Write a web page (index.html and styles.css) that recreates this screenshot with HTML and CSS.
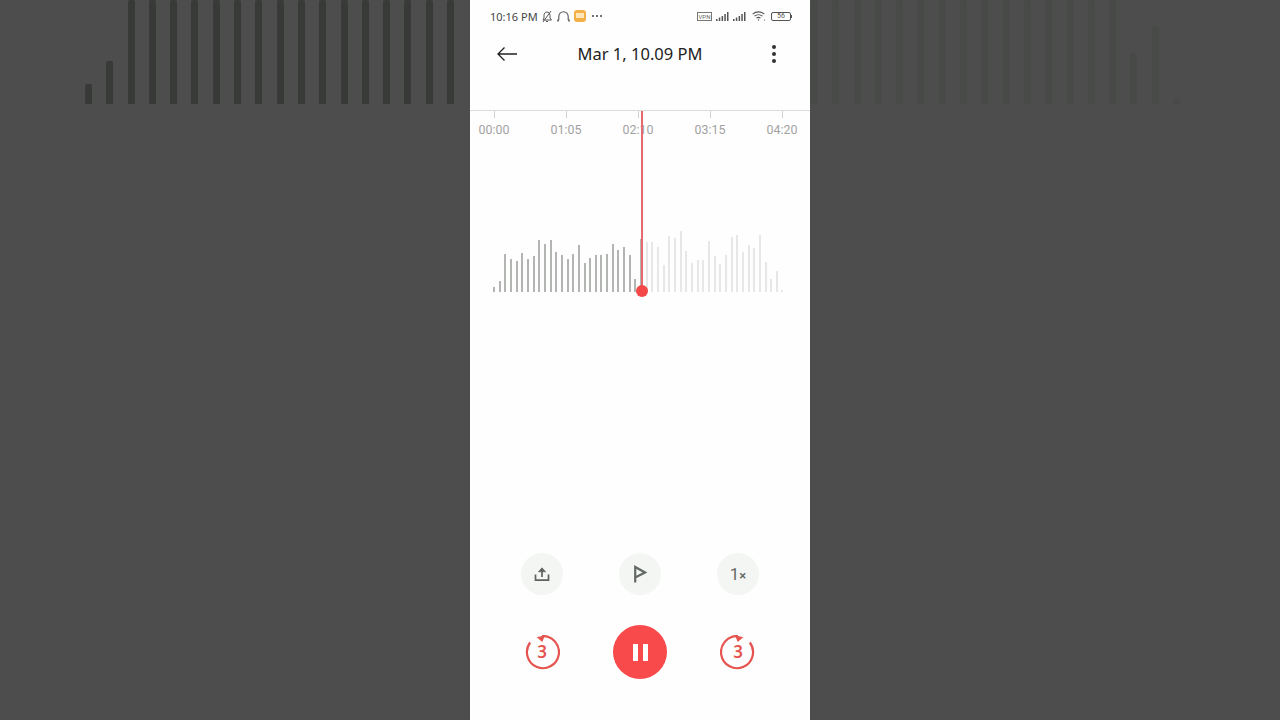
FILE: index.html
```html
<!DOCTYPE html>
<html lang="en">
<head>
  <meta charset="UTF-8" />
  <title>Recorder</title>
  <link rel="stylesheet" href="styles.css">
</head>
<body>
  <div class="side side-left">
    <i style="height:20px"></i><i style="height:43px"></i>
    <i></i><i></i><i></i><i></i><i></i><i></i><i></i><i></i><i></i><i></i><i></i><i></i><i></i><i></i><i></i><i></i>
  </div>

  <div class="phone">
    <div class="status-bar">
      <span class="time">10:16 PM</span>
      <svg class="st-bell" width="12" height="13" viewBox="0 0 12 13" fill="none" stroke="#555" stroke-width="1"><path d="M2 10h8.500L9 8V5.500C9 3.500 7.800 2 6 2S3 3.500 3 5.500V8zM5 11.500h2M10 1 2 12"/></svg>
      <svg class="st-head" width="13" height="13" viewBox="0 0 13 13" fill="none" stroke="#555" stroke-width="1.100"><path d="M1.800 10V6.500a4.700 4.700 0 0 1 9.400 0V10"/><path d="M1 9.500v2M12 9.500v2" stroke-width="1.600"/></svg>
      <span class="st-note"><b></b></span>
      <span class="st-dots"><b></b><b></b><b></b></span>
      <span class="st-right">
        <span class="vpn">VPN</span>
        <svg class="sig" width="13" height="9" viewBox="0 0 13 9" fill="#555"><rect x="0" y="7" width="1.500" height="2"/><rect x="2.800" y="5.500" width="1.500" height="3.500"/><rect x="5.600" y="4" width="1.500" height="5"/><rect x="8.300" y="2" width="1.500" height="7"/><rect x="11" y="0" width="1.500" height="9"/></svg>
        <svg class="sig" width="13" height="9" viewBox="0 0 13 9" fill="#555"><rect x="0" y="7" width="1.500" height="2"/><rect x="2.800" y="5.500" width="1.500" height="3.500"/><rect x="5.600" y="4" width="1.500" height="5"/><rect x="8.300" y="2" width="1.500" height="7"/><rect x="11" y="0" width="1.500" height="9"/></svg>
        <svg class="wifi" width="14" height="10" viewBox="0 0 14 10" fill="none" stroke="#555" stroke-width="1.100"><path d="M.7 3.200a8.500 8.500 0 0 1 11.600 0M2.600 5.200a5.800 5.800 0 0 1 7.800 0M4.500 7.200a3 3 0 0 1 4 0"/><circle cx="6.500" cy="9" r=".7" fill="#555" stroke="none"/><circle cx="12.500" cy="9" r=".6" fill="#555" stroke="none"/></svg>
        <span class="battery"><span class="batt-box">56</span><span class="batt-tip"></span></span>
      </span>
    </div>

    <div class="top-bar">
      <span class="bar-side">
        <svg width="22" height="16" viewBox="0 0 22 16" fill="none" stroke="#222" stroke-width="1.300"><path d="M21 8H2M8.500 1.500 2 8l6.500 6.500"/></svg>
      </span>
      <h1>Mar 1, 10.09 PM</h1>
      <span class="bar-side bar-side-right">
        <span class="more"><b></b><b></b><b></b></span>
      </span>
    </div>

    <div class="timeline">
      <div class="scale">
        <div class="mark"><span class="tick"></span>00:00</div>
        <div class="mark"><span class="tick"></span>01:05</div>
        <div class="mark"><span class="tick"></span>02:10</div>
        <div class="mark"><span class="tick"></span>03:15</div>
        <div class="mark"><span class="tick"></span>04:20</div>
      </div>

      <div class="wave">
        <i style="height:5px"></i><i style="height:11px"></i><i style="height:38px"></i><i style="height:33px"></i><i style="height:31px"></i><i style="height:39px"></i><i style="height:33px"></i><i style="height:36px"></i><i style="height:52px"></i><i style="height:48px"></i><i style="height:52px"></i><i style="height:40px"></i><i style="height:37px"></i><i style="height:33px"></i><i style="height:38px"></i><i style="height:47px"></i><i style="height:29px"></i><i style="height:34px"></i><i style="height:37px"></i><i style="height:37px"></i><i style="height:38px"></i><i style="height:48px"></i><i style="height:42px"></i><i style="height:45px"></i><i style="height:37px"></i><i style="height:13px"></i><i style="height:53px"></i>
        <i class="todo" style="height:50px"></i><i class="todo" style="height:50px"></i><i class="todo" style="height:45px"></i><i class="todo" style="height:27px"></i><i class="todo" style="height:56px"></i><i class="todo" style="height:54px"></i><i class="todo" style="height:61px"></i><i class="todo" style="height:41px"></i><i class="todo" style="height:29px"></i><i class="todo" style="height:32px"></i><i class="todo" style="height:32px"></i><i class="todo" style="height:51px"></i><i class="todo" style="height:36px"></i><i class="todo" style="height:28px"></i><i class="todo" style="height:37px"></i><i class="todo" style="height:55px"></i><i class="todo" style="height:57px"></i><i class="todo" style="height:40px"></i><i class="todo" style="height:47px"></i><i class="todo" style="height:44px"></i><i class="todo" style="height:57px"></i><i class="todo" style="height:30px"></i><i class="todo" style="height:13px"></i><i class="todo" style="height:21px"></i><i class="todo" style="height:2px"></i>
      </div>

      <div class="playhead"></div>
      <div class="playhead-dot"></div>
    </div>

    <div class="controls">
      <div class="tools">
        <span class="tool">
          <svg width="16" height="16" viewBox="0 0 16 16" fill="none" stroke="#5f635f" stroke-width="1.700"><path d="M1.500 8.500v5.700h13V8.500M8 11V2.500"/><path d="M4.300 5.800 8 1.800l3.700 4z" fill="#5f635f" stroke-width=".6"/></svg>
        </span>
        <span class="tool">
          <svg width="14" height="18" viewBox="0 0 14 18" fill="none" stroke="#666a66" stroke-width="2.200"><path d="M2.200 17.500V2L12 7.500 2.200 12.500"/></svg>
        </span>
        <span class="tool speed">1<small>×</small></span>
      </div>
      <div class="transport">
        <span class="skip">
          <svg width="36" height="36" viewBox="0 0 36 36" fill="none" stroke="#e5544f" stroke-width="2.200"><path d="M6.200 8.500A16 16 0 1 0 18 2.200"/><path d="M12.700 3.300 21 1.300 18.300 8z" fill="#e5544f" stroke="none"/></svg>
          <em>3</em>
        </span>
        <span class="pause"><b></b><b></b></span>
        <span class="skip">
          <svg width="36" height="36" viewBox="0 0 36 36" fill="none" stroke="#e5544f" stroke-width="2.200"><path d="M29.800 8.500A16 16 0 1 1 18 2.200"/><path d="M23.300 3.300 15 1.300 17.700 8z" fill="#e5544f" stroke="none"/></svg>
          <em>3</em>
        </span>
      </div>
    </div>
  </div>

  <div class="side side-right">
    <i></i><i></i><i></i><i></i><i></i><i></i><i></i><i></i><i></i><i></i><i></i><i></i><i></i><i></i><i></i>
    <i style="height:51px"></i><i style="height:77px"></i><i style="height:5px"></i>
  </div>
</body>
</html>
```

FILE: styles.css
```css
* {
  box-sizing: border-box;
  margin: 0;
  padding: 0;
}
body {
  width: 1280px;
  height: 720px;
  display: flex;
  overflow: hidden;
  background-color: #4d4d4d;
  font-family: Roboto, sans-serif;
}

/* blurred copy of the waveform behind the phone */
.side {
  width: 470px;
  height: 104px;
  display: flex;
  align-items: flex-end;
  gap: 14.3px;
  overflow: hidden;
}
.side i {
  flex: none;
  width: 7px;
  height: 104px;
  border-radius: 2px 2px 0 0;
}
.side-left {
  padding-left: 85px;
}
.side-left i {
  background-color: #383a38;
}
.side-right {
  padding-left: 1px;
}
.side-right i {
  background-color: #474a47;
}

.phone {
  position: relative;
  width: 340px;
  height: 720px;
  display: flex;
  flex-direction: column;
  flex: none;
  overflow: hidden;
  background-color: #fefefe;
}

/* status bar */
.status-bar {
  height: 32px;
  display: flex;
  align-items: center;
  padding: 0 18px 0 20px;
  color: #444;
}
.time {
  width: 50px;
  font-family: "Noto Sans", sans-serif;
  font-size: 11px;
  white-space: nowrap;
}
.st-bell {
  margin-left: 1px;
}
.st-head {
  margin-left: 4px;
}
.st-note {
  width: 12px;
  height: 12px;
  margin-left: 4px;
  padding: 3px 2px;
  border-radius: 3px;
  background-color: #f3b14a;
}
.st-note b {
  display: block;
  height: 5px;
  background-color: #fde6b8;
}
.st-dots {
  display: flex;
  gap: 2px;
  margin-left: 6px;
}
.st-dots b {
  width: 2px;
  height: 2px;
  border-radius: 50%;
  background-color: #444;
}
.st-right {
  display: flex;
  align-items: center;
  gap: 4px;
  margin-left: auto;
}
.vpn {
  width: 15px;
  height: 9px;
  border: 1px solid #777;
  color: #666;
  font-size: 6px;
  line-height: 7px;
  text-align: center;
}
.wifi {
  margin-left: 2px;
}
.battery {
  display: flex;
  align-items: center;
  margin-left: 1px;
}
.batt-box {
  width: 20px;
  height: 9px;
  border: 1px solid #555;
  border-radius: 2px;
  color: #555;
  font-size: 7px;
  line-height: 7px;
  text-align: center;
}
.batt-tip {
  width: 1px;
  height: 3px;
  background-color: #555;
}

/* title row */
.top-bar {
  height: 44px;
  display: flex;
  align-items: center;
  padding: 0 34px 0 26px;
}
.bar-side {
  width: 22px;
  display: flex;
}
.bar-side-right {
  justify-content: flex-end;
}
.top-bar h1 {
  flex: 1;
  margin-left: 8px;
  padding-bottom: 1px;
  font-family: "Noto Sans", sans-serif;
  font-size: 16.5px;
  font-weight: 400;
  text-align: center;
  color: #222;
}
.more {
  display: flex;
  flex-direction: column;
  gap: 3px;
}
.more b {
  width: 4px;
  height: 4px;
  border-radius: 50%;
  background-color: #333;
}

/* timeline */
.timeline {
  position: relative;
  height: 182px;
  margin-top: 34px;
  border-top: 1px solid #dcdcdc;
}
.scale {
  display: flex;
  margin-left: -12px;
  width: 360px;
}
.mark {
  width: 72px;
  display: flex;
  flex-direction: column;
  align-items: center;
  color: #a2a2a2;
  font-size: 12.4px;
  line-height: 15px;
}
.tick {
  width: 1px;
  height: 7px;
  margin-bottom: 4px;
  background-color: #d0d0d0;
}
.wave {
  position: absolute;
  left: 23px;
  bottom: 0;
  display: flex;
  align-items: flex-end;
  gap: 3.67px;
}
.wave i {
  flex: none;
  width: 2px;
  background-color: #b3b5b3;
}
.wave i.todo {
  background-color: #e6e7e6;
}
.playhead {
  position: absolute;
  left: 171px;
  top: 0;
  bottom: 0;
  width: 2px;
  background-color: #e46a6e;
}
.playhead-dot {
  position: absolute;
  left: 166px;
  bottom: -5px;
  width: 12px;
  height: 12px;
  border-radius: 50%;
  background-color: #f44848;
}

/* buttons */
.controls {
  margin-top: auto;
  padding-bottom: 41px;
  display: flex;
  flex-direction: column;
  align-items: center;
  gap: 30px;
}
.tools, .transport {
  display: grid;
  grid-template-columns: repeat(3, 98px);
  justify-items: center;
  align-items: center;
}
.tool {
  width: 42px;
  height: 42px;
  display: flex;
  align-items: center;
  justify-content: center;
  border-radius: 50%;
  background-color: #f4f6f3;
  color: #666a66;
  font-size: 17px;
}
.speed small {
  font-size: 13px;
  font-weight: 500;
  line-height: 17px;
  padding-top: 2px;
}
.skip {
  position: relative;
  width: 36px;
  height: 36px;
}
.skip svg {
  display: block;
}
.skip em {
  position: absolute;
  left: 0;
  right: 0;
  top: 8px;
  font-family: "Noto Sans", sans-serif;
  font-size: 17px;
  font-style: normal;
  font-weight: 600;
  line-height: 20px;
  text-align: center;
  color: #e5544f;
}
.pause {
  width: 54px;
  height: 54px;
  display: flex;
  align-items: center;
  justify-content: center;
  gap: 5px;
  border-radius: 50%;
  background-color: #f84a4a;
}
.pause b {
  width: 5px;
  height: 17px;
  background-color: #fff;
}
```
